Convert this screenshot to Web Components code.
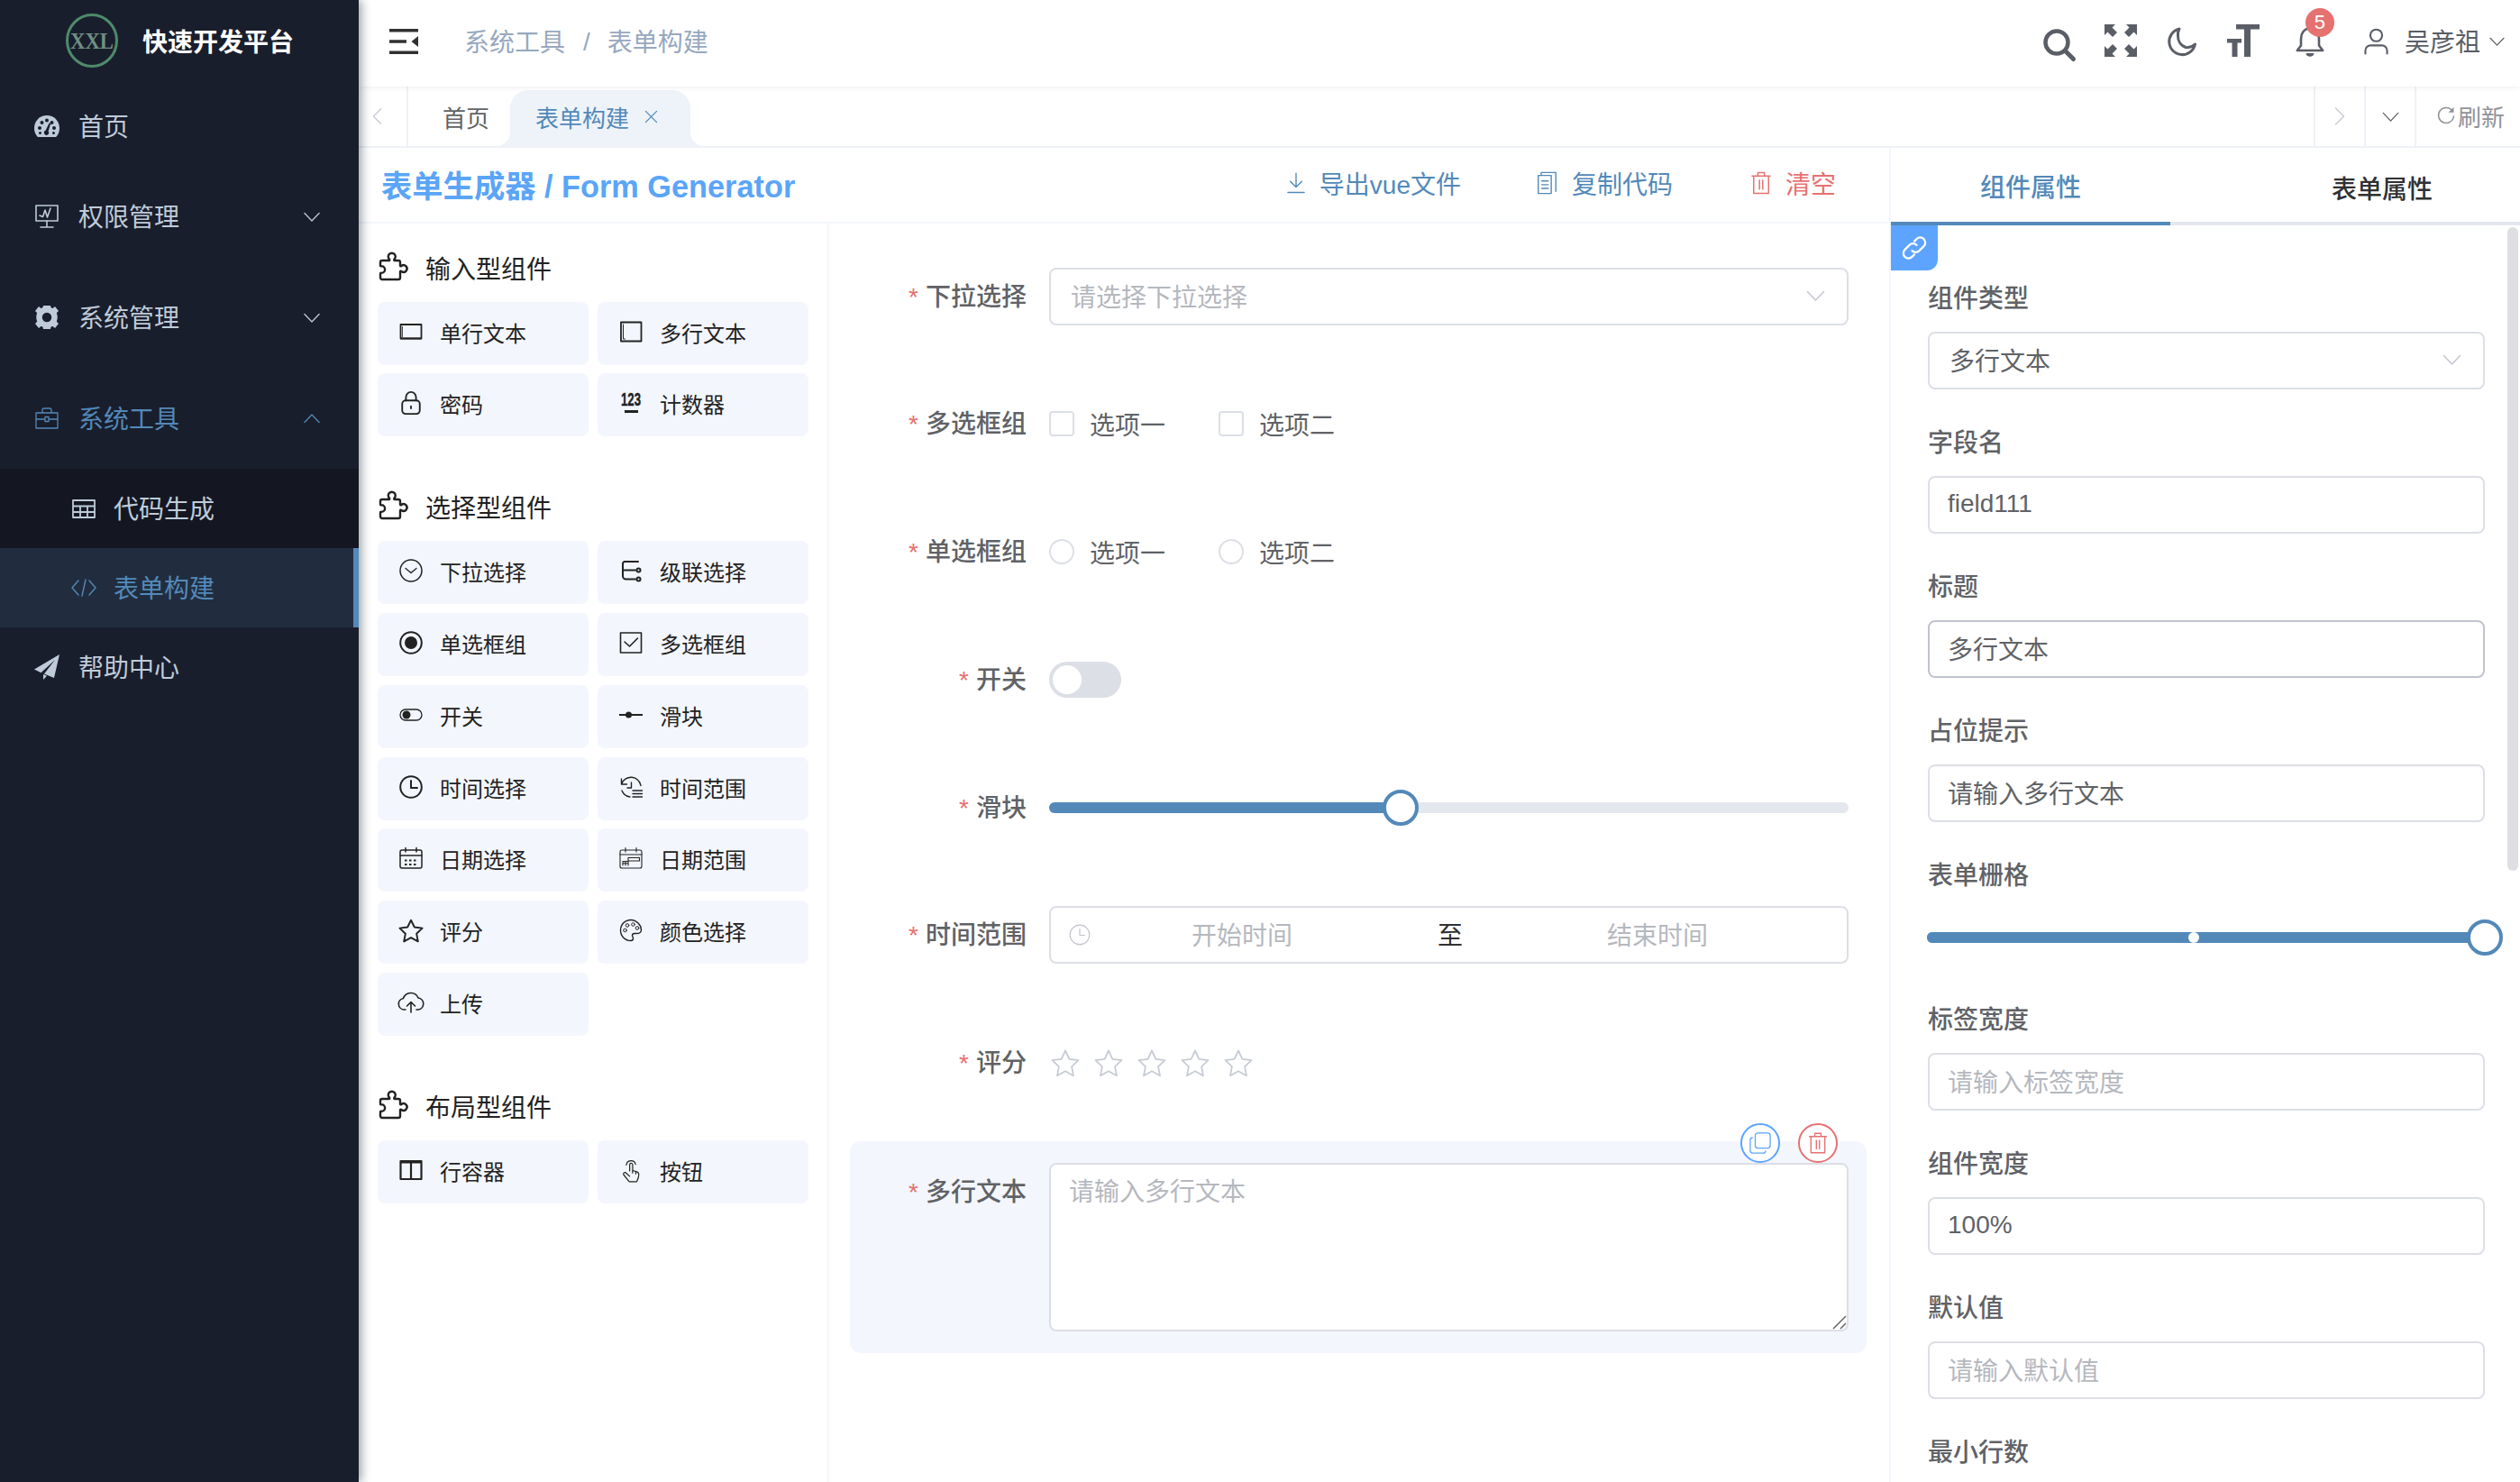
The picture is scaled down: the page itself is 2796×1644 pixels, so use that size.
<!DOCTYPE html>
<html lang="zh"><head><meta charset="utf-8"><title>表单构建</title>
<style>html,body{margin:0;padding:0;background:#fff;font-family:"Liberation Sans","Noto Sans CJK SC",sans-serif}</style></head>
<body>
<x-app>
  <x-sidebar slot="side">
    <x-logo>快速开发平台</x-logo>
    <x-menu-item icon="dashboard" h="88">首页</x-menu-item>
    <x-menu-item icon="board" arrow="down">权限管理</x-menu-item>
    <x-menu-item icon="gear" arrow="down">系统管理</x-menu-item>
    <x-menu-item icon="tool" arrow="up" active>系统工具</x-menu-item>
    <x-menu-item icon="table" h="88" sub>代码生成</x-menu-item>
    <x-menu-item icon="code" h="88" sub active selected>表单构建</x-menu-item>
    <x-menu-item icon="plane" h="88">帮助中心</x-menu-item>
  </x-sidebar>
  <x-navbar slot="nav"></x-navbar>
  <x-tags slot="tags"></x-tags>
  <x-workspace slot="work">
    <x-toolbar slot="bar"></x-toolbar>
    <x-palette slot="palette">
      <x-section title="输入型组件">
        <x-card icon="input">单行文本</x-card><x-card icon="textarea">多行文本</x-card>
        <x-card icon="lock">密码</x-card><x-card icon="num">计数器</x-card>
      </x-section>
      <x-section title="选择型组件">
        <x-card icon="select">下拉选择</x-card><x-card icon="cascader">级联选择</x-card>
        <x-card icon="radio">单选框组</x-card><x-card icon="checkbox">多选框组</x-card>
        <x-card icon="switch">开关</x-card><x-card icon="slider">滑块</x-card>
        <x-card icon="time">时间选择</x-card><x-card icon="timerange">时间范围</x-card>
        <x-card icon="date">日期选择</x-card><x-card icon="daterange">日期范围</x-card>
        <x-card icon="star">评分</x-card><x-card icon="palette">颜色选择</x-card>
        <x-card icon="upload">上传</x-card>
      </x-section>
      <x-section title="布局型组件">
        <x-card icon="row">行容器</x-card><x-card icon="hand">按钮</x-card>
      </x-section>
    </x-palette>
    <x-canvas slot="canvas">
      <x-row label="下拉选择"><x-field ph arrow>请选择下拉选择</x-field></x-row>
      <x-row label="多选框组"><x-check>选项一</x-check><x-check>选项二</x-check></x-row>
      <x-row label="单选框组"><x-check radio>选项一</x-check><x-check radio>选项二</x-check></x-row>
      <x-row label="开关"><x-switch></x-switch></x-row>
      <x-row label="滑块"><x-slider pct="44"></x-slider></x-row>
      <x-row label="时间范围"><x-timerange></x-timerange></x-row>
      <x-row label="评分"><x-rate></x-rate></x-row>
      <x-selected>
        <x-row label="多行文本" inner><x-textarea>请输入多行文本</x-textarea></x-row>
      </x-selected>
    </x-canvas>
    <x-props slot="props">
      <x-prop label="组件类型"><x-field arrow style="--pl:22px">多行文本</x-field></x-prop>
      <x-prop label="字段名"><x-field>field111</x-field></x-prop>
      <x-prop label="标题"><x-field hover>多行文本</x-field></x-prop>
      <x-prop label="占位提示"><x-field>请输入多行文本</x-field></x-prop>
      <x-prop label="表单栅格"><x-slider pct="100" stop="47.8" wide></x-slider></x-prop>
      <x-prop label="标签宽度"><x-field ph>请输入标签宽度</x-field></x-prop>
      <x-prop label="组件宽度"><x-field>100%</x-field></x-prop>
      <x-prop label="默认值"><x-field ph>请输入默认值</x-field></x-prop>
      <x-prop label="最小行数"></x-prop>
    </x-props>
  </x-workspace>
</x-app>
<script>
const S=(w)=>`fill="none" stroke="currentColor" stroke-width="${w}" stroke-linecap="round" stroke-linejoin="round"`;
const BG='#191e2c';
const ICONS={
 dashboard:['0 0 28 26',`<path fill="currentColor" d="M14 1C6.3 1 0 7.2 0 15c0 3.5 1 6.5 3 9 .5.6 1 1 2 1h18c1 0 1.5-.4 2-1 2-2.5 3-5.5 3-9C28 7.2 21.7 1 14 1z"/><g fill="${BG}"><circle cx="6" cy="15" r="2"/><circle cx="8.5" cy="9" r="2"/><circle cx="14" cy="6.5" r="2"/><circle cx="22" cy="15" r="2"/><circle cx="19.5" cy="9" r="2"/><circle cx="6.5" cy="20.5" r="1.5"/><circle cx="21.5" cy="20.5" r="1.5"/><path d="M16.6 9.5l1.6.6-2.6 8.6a2.6 2.6 0 1 1-3-.9z"/></g>`],
 board:['0 0 26 26',`<g ${S(1.6)}><path d="M1 1h24v17H1z"/><path d="M5 12l3.5 1.500L11 6l2.500 8L17 4"/><path d="M13 18v7M6 25h14"/></g>`],
 gear:['0 0 28 26',`<g fill="currentColor"><circle cx="14" cy="13" r="8.500" fill="none" stroke="currentColor" stroke-width="6.500"/><path d="M10 0h8l1 5H9zM10 26h8l1-5H9zM1 6l4-5 5 4-5 5zM27 6l-4-5-5 4 5 5zM1 20l4 5 5-4-5-5zM27 20l-4 5-5-4 5-5z"/></g>`],
 tool:['0 0 26 24',`<g ${S(1.3)}><path d="M1 6h24v17H1zM8 6V3a2 2 0 0 1 2-2h6a2 2 0 0 1 2 2v3M1 13h10M15 13h10M11 10.500h4v5h-4z"/></g>`],
 table:['0 0 26 21',`<g ${S(1.8)} stroke-linecap="butt"><path d="M1 1h24v19H1zM1 7.500h24M1 14h24M9 7.500V20M17 7.500V20"/></g>`],
 code:['0 0 28 20',`<g ${S(1.4)}><path d="M8 2L1 10l7 8M20 2l7 8-7 8M16 1l-4 18"/></g>`],
 plane:['0 0 28 28',`<path fill="currentColor" d="M28 0L0 16.500l7.500 3.700L23 6 11 21.500l11 4.500zM10 22v6l4-4.300z"/>`],
 burger:['0 0 32 28',`<path fill="currentColor" d="M0 0h32v3.500H0zM0 12.200h19v3.500H0zM0 24.500h32V28H0zM32 8v12l-7.500-6z"/>`],
 search:['0 0 36 36',`<circle cx="15" cy="15" r="12.500" fill="none" stroke="currentColor" stroke-width="4.500"/><path d="M24.500 24.500L33.500 33.500" stroke="currentColor" stroke-width="5" stroke-linecap="round"/>`],
 full:['0 0 36 36',`<g fill="currentColor"><path d="M0 0h12L8.500 3.500 14 9l-5 5-5.500-5.500L0 12z"/><path d="M36 0H24l3.500 3.500L22 9l5 5 5.500-5.500L36 12zM0 36h12l-3.500-3.500L14 27l-5-5-5.500 5.500L0 24zM36 36H24l3.500-3.500L22 27l5-5 5.500 5.500L36 24z"/></g>`],
 moon:['0 0 32 32',`<path ${S(3)} d="M13 2A14.500 14.500 0 1 0 30.500 19 12.500 12.500 0 0 1 20 22.500 13 13 0 0 1 11.500 10 13 13 0 0 1 13 2z"/>`],
 size:['0 0 36 36',`<path fill="currentColor" d="M10 0h26v5.500H26V36h-7V5.500h-9zM0 16h16v4.500h-4.500V36H5.500V20.500H0z"/>`],
 bell:['0 0 32 34',`<path ${S(2.6)} d="M16 2.500C9.500 2.500 6 8 6 14v7.500L1.800 27h28.400L26 21.500V14c0-6-3.500-11.500-10-11.500z"/><path fill="currentColor" d="M11.500 30h9c0 2-2 3.800-4.500 3.800s-4.500-1.800-4.500-3.800z"/>`],
 user:['0 0 28 30',`<g ${S(2.200)}><circle cx="14" cy="8" r="6.800"/><path d="M1.500 29v-3.500a6 6 0 0 1 6-6h13a6 6 0 0 1 6 6V29"/></g>`],
 down:['0 0 20 12',`<path ${S(1.4)} d="M1 1.500l9 9.500 9-9.500"/>`],
 up:['0 0 20 12',`<path ${S(1.4)} d="M1 10.500L10 1l9 9.500"/>`],
 left:['0 0 12 20',`<path ${S(1.4)} d="M10.500 1L1.500 10l9 9"/>`],
 right:['0 0 12 20',`<path ${S(1.4)} d="M1.500 1l9 9-9 9"/>`],
 close:['0 0 16 16',`<path ${S(1.4)} d="M1.500 1.500l13 13M14.500 1.500l-13 13"/>`],
 refresh:['0 0 20 20',`<path ${S(1.5)} d="M17 5A8.500 8.500 0 1 0 18.500 11"/><path fill="currentColor" d="M18.500 .8v6h-6z"/>`],
 download:['0 0 22 26',`<path ${S(1.5)} d="M11 1v17M4 11l7 7 7-7M1 24.500h20"/>`],
 doc:['0 0 24 28',`<path ${S(1.5)} d="M5 4V1.500h17.500V24M1.500 5h15.500v21.500H1.500zM5.500 11.500h8M5.500 16h8M5.500 20.500h8"/>`],
 trash:['0 0 24 28',`<path ${S(1.6)} d="M1 5.500h22M8 5.500V1.500h8v4M3 5.500v21h18v-21M10 10.500v11M14 10.500v11"/>`],
 dup:['0 0 26 26',`<path ${S(1.4)} d="M10 1h12a3 3 0 0 1 3 3v12a3 3 0 0 1-3 3H10a3 3 0 0 1-3-3V4a3 3 0 0 1 3-3zM3.500 6.500A3 3 0 0 0 1 9.500V22a3 3 0 0 0 3 3h12.500a3 3 0 0 0 3-2.500"/>`],
 link:['0 0 24 24',`<path ${S(1.8)} d="M10 14.500a4.500 4.500 0 0 0 6.400 0l4-4a4.500 4.500 0 0 0-6.400-6.400l-2 2M14 9.500a4.500 4.500 0 0 0-6.400 0l-4 4a4.500 4.500 0 0 0 6.400 6.400l2-2"/>`],
 clock:['0 0 24 24',`<g ${S(1.2)}><circle cx="12" cy="12" r="10.800"/><path d="M12 5.500v7h5.500"/></g>`],
 rstar:['0 0 32 30',`<path ${S(1.800)} d="M16 1.500l4.400 9.400 10.100 1.300-7.400 7 1.900 10.100-9-5-9 5 1.900-10.100-7.400-7 10.100-1.300z"/>`],
 puzzle:['0 0 32 32',`<path ${S(2.400)} d="M5 10h7.500c.8 0 1-.8.5-1.400a4 4 0 1 1 5.500 0c-.5.6-.3 1.400.5 1.400H23a2 2 0 0 1 2 2v3.500c0 .8.800 1 1.400.5a3.800 3.800 0 1 1 0 6c-.6-.5-1.400-.3-1.400.5V29a2 2 0 0 1-2 2H5a2 2 0 0 1-2-2v-4.500c0-.8.600-1 1.200-.6a3.800 3.800 0 1 0 0-7.800c-.6.400-1.200.2-1.200-.6V12a2 2 0 0 1 2-2z"/>`],
 input:['0 0 26 26',`<path ${S(1.800)} d="M1.500 5h23v15.500h-23z"/><path d="M1.500 20.500h23" stroke="currentColor" stroke-width="1.800"/><path d="M3.500 7v12" stroke="currentColor" stroke-width="0.800"/>`],
 textarea:['0 0 26 26',`<path ${S(1.800)} d="M2 2.500h22.500v21H2z"/><path d="M4.500 5v16h2" ${S(1)}/>`],
 lock:['0 0 26 28',`<g ${S(2)}><rect x="2.500" y="11" width="21" height="16" rx="4"/><path d="M7 11V7a6 6 0 0 1 12 0v4M13 18v2.500"/></g>`],
 num:['0 0 26 26',`<text x="13" y="16" text-anchor="middle" font-family="Liberation Sans" font-weight="700" font-size="20" fill="currentColor" stroke="currentColor" stroke-width=".4" textLength="22" lengthAdjust="spacingAndGlyphs">123</text><rect x="6" y="21" width="15" height="3" fill="currentColor"/>`],
 select:['0 0 26 26',`<circle cx="13" cy="13" r="12" ${S(1.500)}/><path ${S(1.300)} d="M7 10.500l6 5 6-5"/>`],
 cascader:['0 0 26 26',`<g ${S(2)}><path d="M21 3H6a2.500 2.500 0 0 0-2 2.500V19a3.500 3.500 0 0 0 3.500 3.500H18M4.500 12.500H18"/><circle cx="21.500" cy="12.500" r="2"/><circle cx="21.500" cy="22.500" r="2"/></g>`],
 radio:['0 0 26 26',`<circle cx="13" cy="13" r="11.800" ${S(2)}/><circle cx="13" cy="13" r="7" fill="currentColor"/>`],
 checkbox:['0 0 26 26',`<path ${S(1.600)} d="M1.500 2h23v22h-23z"/><path ${S(1.600)} d="M6 12l5.500 5 9-9"/>`],
 switch:['0 0 26 26',`<rect x="1" y="7" width="24" height="12" rx="6" ${S(1.300)}/><circle cx="8" cy="13" r="4.500" fill="currentColor"/>`],
 slider:['0 0 26 26',`<path d="M0 13h26" stroke="currentColor" stroke-width="2"/><circle cx="10.500" cy="13" r="3.500" fill="currentColor"/>`],
 time:['0 0 26 26',`<g ${S(2)}><circle cx="13" cy="13" r="11.800"/><path d="M13 6v8h7"/></g>`],
 timerange:['0 0 26 26',`<g ${S(1.400)}><path d="M2.500 4v6h6M2.800 9.500A11 11 0 0 1 24 11.500M3 17a11 11 0 0 0 9 7M13.500 8v6H9M15 17h10.500M15 20.500h10.500M15 24h10.500"/></g>`],
 date:['0 0 26 26',`<g ${S(1.500)}><rect x="1" y="4" width="24" height="20" rx="2"/><path d="M1 10h24M7 1.500V6M19 1.500V6"/></g><g stroke="currentColor" stroke-width="2" stroke-dasharray="2.500 2.500"><path d="M6 15.500h14M6 20h14"/></g>`],
 daterange:['0 0 26 26',`<g ${S(1.100)}><rect x="1" y="4" width="24" height="20" rx="2"/><path d="M1 9h24M7 1.500V6M19 1.500V6M4 21v-4.500h6V21M4 18.800h6M10 16.500v-4h12.500v3.500H10M7 16.500V21"/></g>`],
 star:['0 0 32 30',`<path ${S(2.200)} d="M16 2l4.400 9 10.100 1.300-7.400 7 1.900 10-9-5-9 5 1.900-10-7.400-7L11.600 11z"/>`],
 palette:['0 0 26 26',`<path ${S(1.400)} d="M13 1.500C6.500 1.500 1.500 6.500 1.500 13S6.500 24.500 13 24.500c1.500 0 2.500-1 2.500-2.500 0-1.500-1-2-1-3.300 0-1.400 1-2.200 2.400-2.200h3c2.600 0 4.600-1.800 4.600-3.800 0-5.400-5.300-11.200-11.500-11.200z"/><g ${S(1)}><circle cx="6.500" cy="13" r="1.800"/><circle cx="9" cy="7.500" r="1.800"/><circle cx="15.500" cy="6.500" r="1.800"/><circle cx="20" cy="10.500" r="1.800"/></g>`],
 upload:['0 0 30 24',`<path ${S(1.600)} d="M9 20H7.500a6.300 6.300 0 0 1-1-12.500A8.800 8.800 0 0 1 23 7a6.600 6.600 0 0 1 .5 13H21M15 23V11.500M10.500 16l4.500-4.500 4.500 4.500"/>`],
 row:['0 0 26 26',`<path ${S(2.200)} d="M1.500 3h23v20h-23zM13 3v20"/><path d="M1.500 4h23" stroke="currentColor" stroke-width="3"/>`],
 hand:['0 0 24 30',`<path ${S(1.300)} d="M10.500 16V8.500a1.800 1.800 0 0 1 3.600 0v7l5 1.500c1.500.5 2.500 1.500 2.500 3.200 0 3-1 5.800-2.500 8.800H10L3.500 21c-.8-1-.7-2 .2-2.700.9-.7 2-.4 2.800.5l4 3.700M14 15.500v3M18 17v2.500M6.500 9a5.700 5.700 0 0 1 11.200-1"/>`]
};
const def=(tag,css,html)=>customElements.define(tag,class extends HTMLElement{
  connectedCallback(){ if(this.shadowRoot) return;
    const r=this.attachShadow({mode:'open'});
    r.innerHTML=`<style>${css}</style>`+(typeof html==='function'?html(this):html);
  }});
const ic=(n,w,h,extra='')=>`<x-icon name="${n}" w="${w}" h="${h}" style="${extra}"></x-icon>`;

def('x-icon',':host{display:inline-flex;flex:none}svg{display:block;overflow:visible}',e=>{
  const [vb,inner]=ICONS[e.getAttribute('name')];
  return `<svg xmlns="http://www.w3.org/2000/svg" viewBox="${vb}" width="${e.getAttribute('w')}" height="${e.getAttribute('h')}">${inner}</svg>`;
});

def('x-app',`:host{display:grid;width:2796px;height:1644px;overflow:hidden;grid-template-columns:398px 1fr;grid-template-rows:96px 68px 1fr;color:#303133;font-family:"Liberation Sans","Noto Sans CJK SC",sans-serif}
 ::slotted([slot=side]){grid-row:1/4}`,
 `<slot name="side"></slot><slot name="nav"></slot><slot name="tags"></slot><slot name="work"></slot>`);

def('x-sidebar',`:host{display:block;background:${BG};box-shadow:3px 0 10px rgba(0,21,41,.4);position:relative;z-index:3;color:#bfcbd9;grid-row:1/4;min-height:0}`,`<slot></slot>`);

def('x-logo',`:host{display:flex;align-items:center;height:90px;margin-bottom:6px;padding-left:73px;color:#fff;font-size:28px;font-weight:600;gap:27px;box-sizing:content-box}
 svg{display:block}`,
 `<svg width="58" height="60" viewBox="0 0 58 60"><ellipse cx="29" cy="30" rx="27.500" ry="28.500" fill="none" stroke="#4e8a6b" stroke-width="3"/><text x="29" y="38.500" text-anchor="middle" font-family="Liberation Serif" font-size="25" fill="#6f8f84" textLength="48" lengthAdjust="spacingAndGlyphs">XXL</text></svg><span><slot></slot></span>`);

def('x-menu-item',`:host{display:flex;align-items:center;height:var(--h,112px);padding-left:38px;padding-right:43px;font-size:28px;color:#bfcbd9;box-sizing:border-box}
 :host([active]){color:#5389b9}
 :host([sub]){background:#141722;padding-left:79px;--g:19px}
 :host([selected]){background:#212d3f;box-shadow:inset -6px 0 0 #5389b9}
 .i{width:28px;display:flex;justify-content:center;margin-right:var(--g,21px)}
 .t{flex:1;margin-top:-3px}`,
 e=>{ if(e.getAttribute('h')) e.style.setProperty('--h',e.getAttribute('h')+'px');
  const n=e.getAttribute('icon');
  const sz={dashboard:[28,26],board:[26,26],gear:[28,26],tool:[26,24],table:[26,21],code:[28,20],plane:[28,28]}[n];
  const a=e.getAttribute('arrow');
  return `<span class="i">${ic(n,sz[0],sz[1])}</span><span class="t"><slot></slot></span>${a?ic(a,18,11):''}`;
 });

def('x-navbar',`:host{display:flex;align-items:center;height:96px;padding:0 17px 4px 34px;box-sizing:border-box;background:#fff;position:relative;z-index:2;box-shadow:0 1px 6px rgba(0,21,41,.07);font-size:28px}
 .crumb{margin-left:51px;color:#97a8be;display:flex;align-items:center;margin-top:-2px}
 .crumb i{font-style:normal;margin:3px 19px 0 20px}
 .right{margin-left:auto;display:flex;align-items:center;color:#5a5e66}
 .bell{position:relative;display:flex;margin-left:40px}
 .badge{position:absolute;left:11px;top:-20px;width:32px;height:32px;border-radius:50%;background:#e67171;color:#fff;font-size:22px;line-height:32px;text-align:center}
 .name{margin:-3px 10px 0 18px}`,
 `${ic('burger',32,28)}<div class="crumb"><span>系统工具</span><i>/</i><span>表单构建</span></div>
 <div class="right">${ic('search',36,36,'margin-top:8px')}${ic('full',36,36,'margin-left:32px;margin-top:-2px')}${ic('moon',32,32,'margin-left:34px')}${ic('size',36,36,'margin-left:34px;margin-top:-2px')}
 <span class="bell">${ic('bell',32,34)}<span class="badge">5</span></span>${ic('user',27,30,'margin-left:44px')}<span class="name">吴彦祖</span>${ic('down',17,10)}</div>`);

def('x-tags',`:host{display:flex;height:68px;box-sizing:border-box;border-bottom:2px solid #eef1f6;background:#fff;font-size:26px;color:#606266;align-items:stretch;position:relative;z-index:1}
 .cell{display:flex;align-items:center;justify-content:center;border-left:2px solid #eef1f6;width:56px;box-sizing:border-box;color:#c6cad2}
 .cell.l{border-left:0;border-right:2px solid #eef1f6;width:55px;padding-right:12px}
 .tabs{flex:1;display:flex;align-items:flex-end}
 .tab{height:62px;display:flex;align-items:center;padding-bottom:4px;box-sizing:border-box}
 .t1{width:113px;padding-left:38px}
 .t2{width:200px;padding-left:28px;background:#eef3f9;color:#5389b9;border-radius:20px 20px 0 0;position:relative;gap:17px}
 .t2::before,.t2::after{content:"";position:absolute;bottom:0;width:16px;height:16px}
 .t2::before{left:-16px;background:radial-gradient(circle at 0 0,transparent 16px,#eef3f9 16.500px)}
 .t2::after{right:-16px;background:radial-gradient(circle at 100% 0,transparent 16px,#eef3f9 16.500px)}
 .ref{width:117px;color:#909399;justify-content:flex-start;padding-left:23px;padding-bottom:2px;gap:3px}`,
 `<div class="cell l">${ic('left',11,20)}</div>
 <div class="tabs"><div class="tab t1">首页</div><div class="tab t2"><span>表单构建</span>${ic('close',15,15)}</div></div>
 <div class="cell">${ic('right',12,20)}</div><div class="cell" style="color:#606266">${ic('down',19,11)}</div><div class="cell ref">${ic('refresh',20,20)}<span>刷新</span></div>`);

def('x-workspace',`:host{display:grid;grid-template-columns:522px 1178px 698px;grid-template-rows:84px 1fr;min-height:0;overflow:hidden;background:#fff}
 ::slotted([slot=bar]){grid-column:1/3}
 ::slotted([slot=props]){grid-column:3;grid-row:1/3}`,
 `<slot name="bar"></slot><slot name="palette"></slot><slot name="canvas"></slot><slot name="props"></slot>`);

def('x-toolbar',`:host{display:flex;align-items:center;height:84px;box-sizing:border-box;border-bottom:2px solid #f3f6fb;border-right:2px solid #f3f6fb;padding:0 59px 4px 25px;font-size:28px}
 h1{margin:8px 0 0;font-size:34.300px;font-weight:600;color:#5ba5f7;line-height:1}
 .b{display:flex;align-items:center;gap:16px;color:#5389b9;margin-left:87px}
 .b.m{margin-left:84px}
 .b.f{margin-left:auto}.d{color:#e67171}`,
 `<h1>表单生成器 / Form Generator</h1>
 <span class="b f">${ic('download',20,26)}<span>导出vue文件</span></span>
 <span class="b m">${ic('doc',23,26)}<span>复制代码</span></span>
 <span class="b d">${ic('trash',22,26)}<span>清空</span></span>`);

def('x-palette',`:host{display:block;box-sizing:border-box;border-right:2px solid #f3f6fb;padding:12.500px 21px 0;min-height:0;overflow:hidden}`,`<slot></slot>`);

def('x-section',`:host{display:block;margin-bottom:42px}
 .h{display:flex;align-items:center;height:74px;font-size:28px;color:#222;gap:21px}
 .h span{margin-top:-2px}
 .g{display:grid;grid-template-columns:234px 234px;column-gap:10px;row-gap:9.800px}`,
 e=>`<div class="h">${ic('puzzle',32,32,'margin-top:-6px')}<span>${e.getAttribute('title')}</span></div><div class="g"><slot></slot></div>`);

def('x-card',`:host{display:flex;align-items:center;height:70px;background:#f3f6fd;border-radius:8px;padding-left:24px;font-size:24px;color:#222;box-sizing:border-box}
 .i{width:26px;display:flex;justify-content:center;margin-right:19px;margin-top:-4px}
 .t{margin-top:-3px}`,
 e=>{const n=e.getAttribute('icon');const sz={star:[28,26],upload:[30,24],hand:[22,28]}[n]||[26,26];
  return `<span class="i">${ic(n,sz[0],sz[1])}</span><span class="t"><slot></slot></span>`});

def('x-canvas',`:host{display:block;padding-top:48.500px;min-height:0;overflow:hidden;box-sizing:border-box;border-right:2px solid #f3f6fb}`,`<slot></slot>`);

def('x-row',`:host{display:flex;align-items:flex-start;height:141.800px;font-size:28px;color:#606266}
 :host([inner]){height:auto}
 label{width:219px;flex:none;text-align:right;line-height:66px;font-weight:500;margin-right:25px}
 :host([inner]) label{width:196px}
 b{color:#e67171;font-weight:400;margin-right:8px}
 .c{display:flex;align-items:center;min-height:64px;width:887px;flex:none}
 :host([inner]) .c{align-items:flex-start}`,
 e=>`<label><b>*</b>${e.getAttribute('label')}</label><div class="c"><slot></slot></div>`);

def('x-field',`:host{display:flex;align-items:center;justify-content:space-between;width:100%;height:64px;box-sizing:border-box;border:2px solid #dcdfe6;border-radius:8px;padding:0 24px 2px var(--pl,22px);font-size:28px;color:#606266;background:#fff}
 :host([ph]){color:#b5b8be}
 :host([hover]){border-color:#c0c4cc}
 x-icon{color:#c0c4cc}`,
 e=>`<span><slot></slot></span>${e.hasAttribute('arrow')?ic('down',21,12):''}`);

def('x-check',`:host{display:inline-flex;align-items:center;gap:17px;margin-right:59px;font-size:28px;color:#606266}
 i{display:block;width:28px;height:28px;box-sizing:border-box;border:2px solid #dcdfe6;border-radius:4px;background:#fff}
 :host([radio]) i{border-radius:50%}`,`<i></i><span><slot></slot></span>`);

def('x-switch',`:host{display:block;width:80px;height:40px;border-radius:20px;background:#dcdfe6;padding:4px;box-sizing:border-box}
 i{display:block;width:32px;height:32px;border-radius:50%;background:#fff}`,`<i></i>`);

def('x-slider',`:host{display:block;position:relative;width:100%;height:12px;background:#e4e7ed;border-radius:6px}
 :host([wide]){width:621px;margin-left:-1px;background:#5389b9}
 .f{height:100%;border-radius:6px;background:#5389b9}
 .h{position:absolute;top:-14px;width:40px;height:40px;margin-left:-20px;box-sizing:border-box;border:4px solid #5389b9;border-radius:50%;background:#fff}
 .s{position:absolute;top:0;width:12px;height:12px;margin-left:-6px;border-radius:50%;background:#fff}`,
 e=>{const p=e.getAttribute('pct'),s=e.getAttribute('stop');
  return `<div class="f" style="width:${p}%"></div>${s?`<div class="s" style="left:${s}%"></div>`:''}<div class="h" style="left:${p}%"></div>`});

def('x-timerange',`:host{display:flex;align-items:center;width:100%;height:64px;box-sizing:border-box;border:2px solid #dcdfe6;border-radius:8px;padding-left:20px;font-size:28px;color:#b5b8be}
 x-icon{color:#c0c4cc}
 .g{display:grid;grid-template-columns:332px 130px 330px;text-align:center;margin-left:2px;margin-top:-2px}
 .m{color:#303133}`,
 `${ic('clock',24,24)}<div class="g"><span>开始时间</span><span class="m">至</span><span>结束时间</span></div>`);

def('x-rate',`:host{display:flex;gap:16px;color:#c6cbd4;padding-left:2px}`,Array(5).fill(0).map(()=>ic('rstar',32,30)).join(''));

def('x-selected',`:host{display:block;position:relative;margin:-23.100px 25px 0 23px;padding:24px 0 24px;background:#f3f6fd;border-radius:12px}
 .a{position:absolute;top:-20px;width:44px;height:44px;box-sizing:border-box;border:2px solid;border-radius:50%;background:#fff;display:flex;align-items:center;justify-content:center}`,
 `<slot></slot><span class="a" style="left:988px;color:#5ca4ff">${ic('dup',24,24)}</span><span class="a" style="left:1052px;color:#e67171">${ic('trash',22,24)}</span>`);

def('x-textarea',`:host{display:block;position:relative;width:100%;height:187px;box-sizing:border-box;border:2px solid #dcdfe6;border-radius:8px;background:#fff;padding:10px 20px;font-size:28px;line-height:42px;color:#b5b8be}
 svg{position:absolute;right:0;bottom:0}`,
 `<slot></slot><svg width="16" height="16" viewBox="0 0 16 16"><path d="M1 15L15 1M9 15l6-6" stroke="#666" stroke-width="1.500"/></svg>`);

def('x-props',`:host{display:block;position:relative;overflow:hidden;min-height:0;background:#fff;width:698px}
 .tabs{display:flex;height:86px;box-sizing:border-box;border-bottom:4px solid #e4e7ed;font-size:28px;font-weight:500;position:relative}
 .t{display:flex;align-items:center;justify-content:center;height:86px;box-sizing:border-box;padding-top:2px}
 .a{width:310px;color:#5389b9;border-bottom:4px solid #5389b9}
 .b{color:#303133;margin-left:179px}
 .body{padding:42px 39px 0 41px}
 .tag{position:absolute;left:0;top:86px;width:52px;height:50px;background:#5ca4ff;border-radius:0 0 12px 0;display:flex;align-items:center;justify-content:center;color:#fff}
 .sb{position:absolute;top:88px;left:684px;width:12px;height:714px;border-radius:6px;background:#dedfe2}`,
 `<div class="tabs"><div class="t a">组件属性</div><div class="t b">表单属性</div></div>
 <div class="tag">${ic('link',30,30)}</div><div class="sb"></div>
 <div class="body"><slot></slot></div>`);

def('x-prop',`:host{display:block;height:160px;--pl:20px}
 label{display:block;height:76px;line-height:79px;font-size:28px;font-weight:500;color:#606266}
 .c{height:64px;display:flex;align-items:center}`,
 e=>`<label>${e.getAttribute('label')}</label><div class="c"><slot></slot></div>`);
</script>
</body></html>
